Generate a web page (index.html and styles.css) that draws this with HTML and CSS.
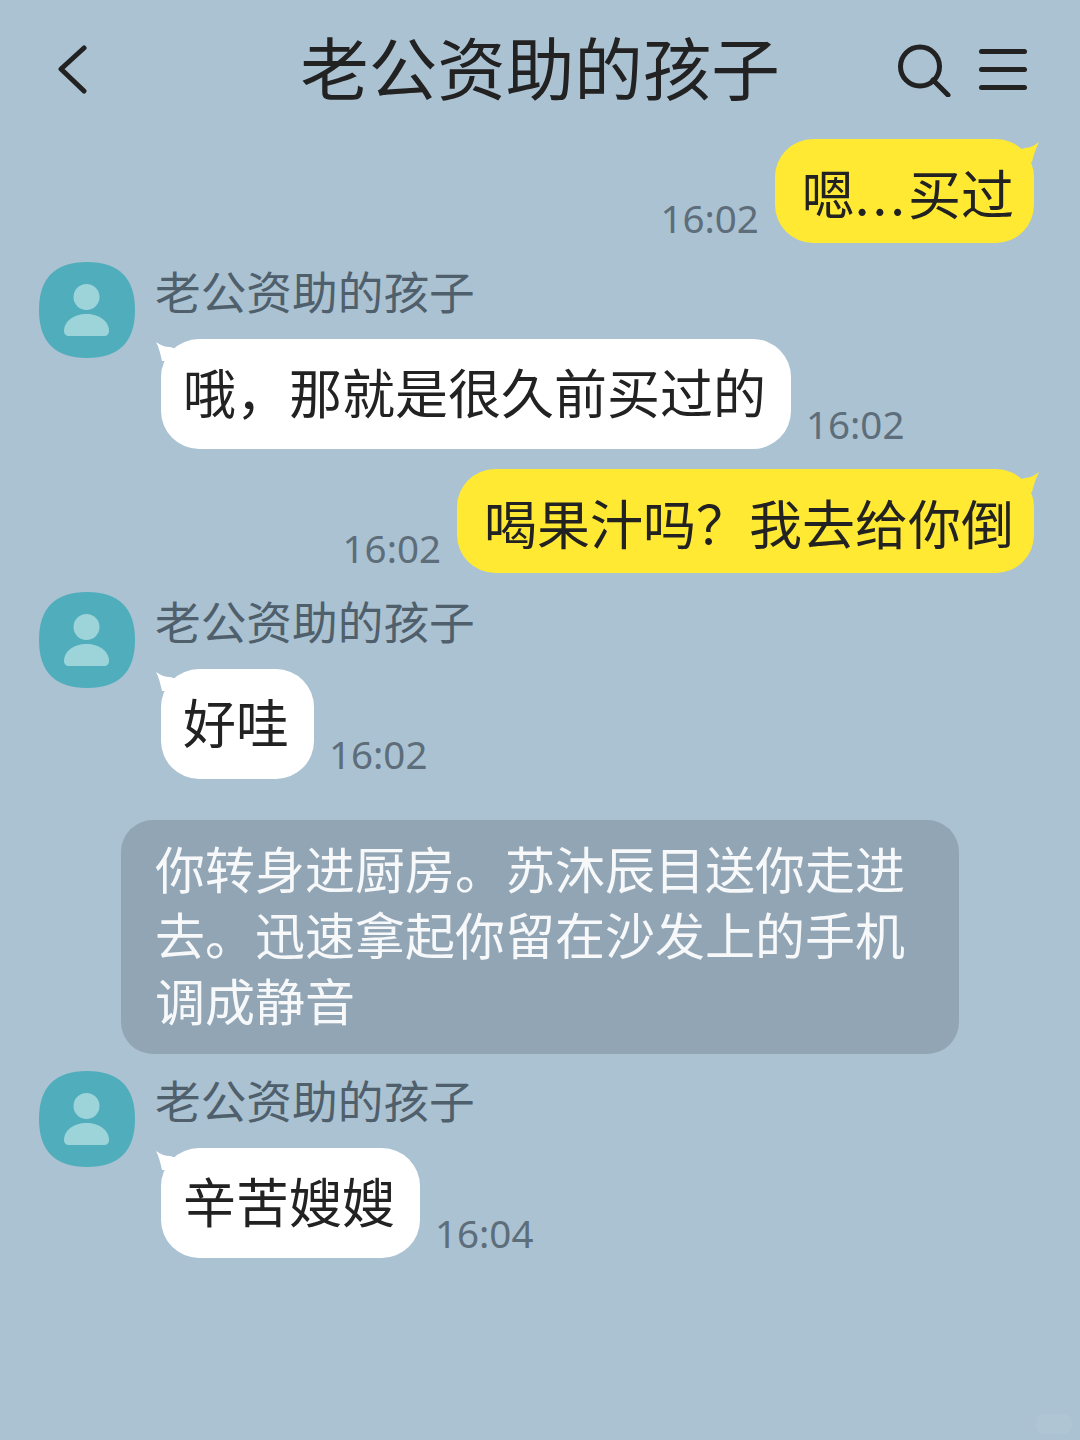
FILE: index.html
```html
<!doctype html>
<html>
<head>
<meta charset="utf-8">
<link rel="stylesheet" href="styles.css">
<title>老公资助的孩子</title>
</head>
<body>
<svg class="defs" width="0" height="0">
  <symbol id="avatar" viewBox="0 0 96 96">
    <path fill="#4fadbc" d="M48 0C80 0 96 16 96 48C96 80 80 96 48 96C16 96 0 80 0 48C0 16 16 0 48 0Z"/>
    <circle fill="#9dd4da" cx="47.500" cy="35" r="13"/>
    <path fill="#9dd4da" d="M25 69C25 59 35 52 47.500 52C60 52 70 59 70 69C70 72 68 74 65 74H30C27 74 25 72 25 69Z"/>
  </symbol>
</svg>

<div class="page">
  <header class="topbar">
    <svg class="back" width="30" height="52" viewBox="0 0 30 52"><path d="M26 4L3 25L26 47"/></svg>
    <h1 class="title">老公资助的孩子</h1>
    <div class="tools">
      <svg class="search" width="54" height="54" viewBox="0 0 54 54"><circle cx="22" cy="23.500" r="19.500"/><path d="M35 37L50 52"/></svg>
      <div class="menu"><span></span><span></span><span></span></div>
    </div>
  </header>

  <div class="chat">
    <div class="msg-out first">
      <span class="time">16:02</span>
      <div class="bubble yellow">嗯<span class="dots">...</span>买过
        <svg class="tail-r" width="22" height="20" viewBox="0 0 22 20"><path d="M21 0C17 3 12 6 7 6L0 8L0 20L14 20C16 12 18 6 21 0Z"/></svg>
      </div>
    </div>

    <div class="msg-in">
      <svg class="avatar"><use href="#avatar"/></svg>
      <div class="body">
        <div class="name">老公资助的孩子</div>
        <div class="line">
          <div class="bubble white">哦，那就是很久前买过的
            <svg class="tail-l" width="22" height="20" viewBox="0 0 22 20"><path d="M1 1C5 4 10 6 15 6L22 8L22 20L7 20C5 12 4 6 1 1Z"/></svg>
          </div>
          <span class="time">16:02</span>
        </div>
      </div>
    </div>

    <div class="msg-out">
      <span class="time">16:02</span>
      <div class="bubble yellow">喝果汁吗？我去给你倒
        <svg class="tail-r" width="22" height="20" viewBox="0 0 22 20"><path d="M21 0C17 3 12 6 7 6L0 8L0 20L14 20C16 12 18 6 21 0Z"/></svg>
      </div>
    </div>

    <div class="msg-in">
      <svg class="avatar"><use href="#avatar"/></svg>
      <div class="body">
        <div class="name">老公资助的孩子</div>
        <div class="line">
          <div class="bubble white">好哇
            <svg class="tail-l" width="22" height="20" viewBox="0 0 22 20"><path d="M1 1C5 4 10 6 15 6L22 8L22 20L7 20C5 12 4 6 1 1Z"/></svg>
          </div>
          <span class="time">16:02</span>
        </div>
      </div>
    </div>

    <div class="narration">你转身进厨房。苏沐辰目送你走进去。迅速拿起你留在沙发上的手机调成静音</div>

    <div class="msg-in last">
      <svg class="avatar"><use href="#avatar"/></svg>
      <div class="body">
        <div class="name">老公资助的孩子</div>
        <div class="line">
          <div class="bubble white">辛苦嫂嫂
            <svg class="tail-l" width="22" height="20" viewBox="0 0 22 20"><path d="M1 1C5 4 10 6 15 6L22 8L22 20L7 20C5 12 4 6 1 1Z"/></svg>
          </div>
          <span class="time">16:04</span>
        </div>
      </div>
    </div>
  </div>

  <div class="mark"></div>
</div>
</body>
</html>
```

FILE: styles.css
```css
html,
body {
    margin: 0;
    padding: 0;
}
body {
    font-family: "Noto Sans CJK SC", "Noto Sans", sans-serif;
    color: #222;
    background: #abc2d2;
}
.defs {
    display: block;
    height: 0;
}
.page {
    position: relative;
    width: 1080px;
    height: 1440px;
    overflow: hidden;
}

/* top bar */
.topbar {
    display: flex;
    align-items: center;
    justify-content: space-between;
    height: 139px;
    padding: 0 53px 0 58px;
    box-sizing: border-box;
}
.back path,
.search circle,
.search path {
    fill: none;
    stroke: #222;
    stroke-width: 5px;
    stroke-linecap: round;
    stroke-linejoin: round;
}
.title {
    position: absolute;
    left: 0;
    right: 0;
    top: 23px;
    margin: 0;
    font-size: 68.500px;
    line-height: 86px;
    font-weight: 400;
    text-align: center;
}
.tools {
    display: flex;
    align-items: center;
    gap: 27px;
}
.menu {
    display: flex;
    flex-direction: column;
    gap: 13px;
    width: 48px;
}
.menu span {
    height: 5px;
    border-radius: 3px;
    background: #222;
}

/* messages */
.chat {
    display: flex;
    flex-direction: column;
}
.bubble {
    position: relative;
    box-sizing: border-box;
    font-size: 53px;
    line-height: 70px;
    white-space: nowrap;
}
.dots {
    letter-spacing: 3px;
}
.yellow {
    height: 104px;
    padding: 18px 20px 0 27px;
    border-radius: 38px;
    background: #ffe933;
}
.white {
    height: 110px;
    padding: 17px 25px 0 22px;
    border-radius: 38px;
    background: #fff;
}
.tail-r {
    position: absolute;
    right: -6px;
    top: 3px;
}
.tail-r path {
    fill: #ffe933;
}
.tail-l {
    position: absolute;
    left: -6px;
    top: 2px;
}
.tail-l path {
    fill: #fff;
}
.time {
    font-family: "Noto Sans", sans-serif;
    font-size: 38.500px;
    line-height: 50px;
    color: #5d6d7a;
}
.msg-out {
    display: flex;
    justify-content: flex-end;
    align-items: flex-end;
    gap: 16px;
    padding-right: 46px;
    margin-bottom: 19px;
}
.msg-in {
    display: flex;
    padding-left: 39px;
    margin-bottom: 20px;
}
.avatar {
    flex: none;
    width: 96px;
    height: 96px;
}
.body {
    margin-left: 20px;
}
.name {
    height: 77px;
    font-size: 45.700px;
    line-height: 56px;
    color: #4f5f6c;
    white-space: nowrap;
}
.line {
    display: flex;
    align-items: flex-end;
    gap: 15px;
    padding-left: 6px;
}

/* narration */
.narration {
    box-sizing: border-box;
    width: 838px;
    height: 234px;
    margin: 21px 0 17px 121px;
    padding: 14px 30px 0 34px;
    border-radius: 32px;
    background: #92a5b5;
    color: #f6f8fa;
    font-size: 50px;
    line-height: 66px;
}

/* faint watermark, bottom right */
.mark {
    position: absolute;
    right: 8px;
    bottom: 6px;
    width: 36px;
    height: 20px;
    border-radius: 8px;
    background: rgba(255, 255, 255, 0.06);
}
```
